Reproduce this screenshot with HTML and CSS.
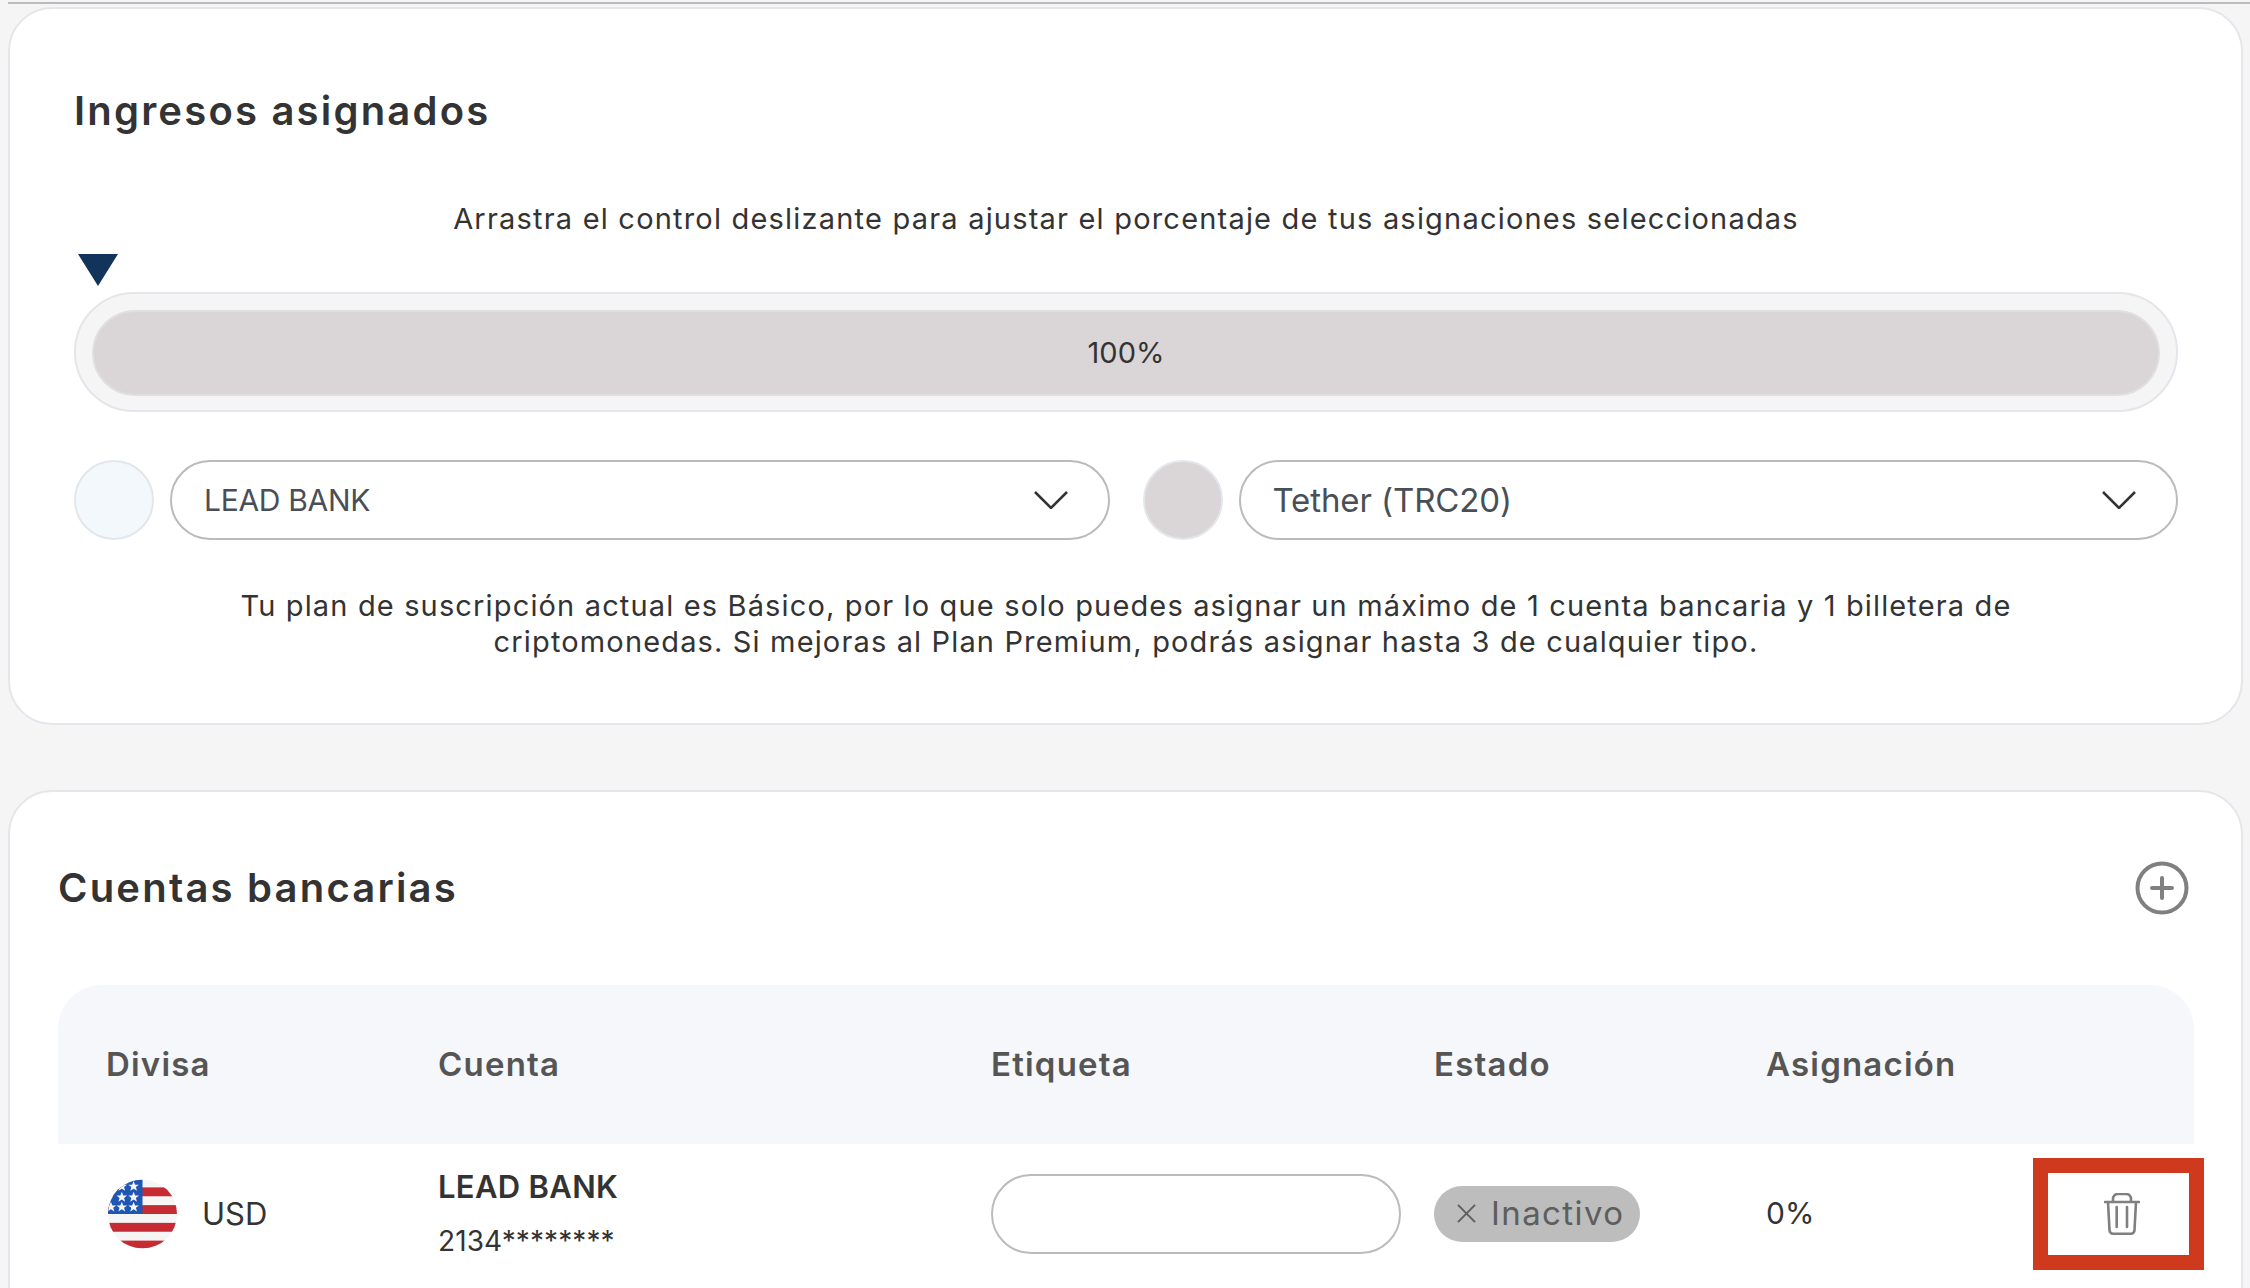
FILE: index.html
```html
<!DOCTYPE html>
<html lang="es">
<head>
  <meta charset="UTF-8">
  <title>Ingresos asignados</title>
  <link rel="stylesheet" href="styles.css">
</head>
<body>
  <div class="top-line"></div>

  <section class="card card-income">
    <h2 class="income-title">Ingresos asignados</h2>
    <p class="hint">Arrastra el control deslizante para ajustar el porcentaje de tus asignaciones seleccionadas</p>
    <div class="marker"></div>
    <div class="slider">
      <div class="slider-fill">100%</div>
    </div>
    <div class="pickers">
      <div class="picker">
        <span class="dot dot-blue"></span>
        <div class="select">
          <span class="select-label">LEAD BANK</span>
          <svg class="chevron" viewBox="0 0 34 18"><path d="M1 1l16 16L33 1"/></svg>
        </div>
      </div>
      <div class="picker">
        <span class="dot dot-grey"></span>
        <div class="select">
          <span class="select-label label-wide">Tether (TRC20)</span>
          <svg class="chevron" viewBox="0 0 34 18"><path d="M1 1l16 16L33 1"/></svg>
        </div>
      </div>
    </div>
    <p class="plan-note">Tu plan de suscripción actual es Básico, por lo que solo puedes asignar un máximo de 1 cuenta bancaria y 1 billetera de<br>criptomonedas. Si mejoras al Plan Premium, podrás asignar hasta 3 de cualquier tipo.</p>
  </section>

  <section class="card card-accounts">
    <div class="accounts-head">
      <h2 class="accounts-title">Cuentas bancarias</h2>
      <svg class="add-icon" viewBox="0 0 54 54">
        <circle cx="27" cy="27" r="24.5"/>
        <path d="M17 27h20M27 17v20"/>
      </svg>
    </div>
    <div class="table-head table-cols">
      <span>Divisa</span>
      <span>Cuenta</span>
      <span>Etiqueta</span>
      <span>Estado</span>
      <span>Asignación</span>
    </div>
    <div class="table-row table-cols">
      <div class="currency">
        <svg class="flag" viewBox="0 0 70 70">
          <defs>
            <clipPath id="flagClip"><circle cx="35" cy="35" r="35"/></clipPath>
            <polygon id="star" points="0,-5.5 1.5,-1.7 5.4,-1.7 2.3,0.7 3.4,4.5 0,2.3 -3.4,4.5 -2.3,0.7 -5.4,-1.7 -1.5,-1.7" fill="#f5f5f5"/>
          </defs>
          <g clip-path="url(#flagClip)">
            <rect width="70" height="70" fill="#f5f5f5"/>
            <rect y="8" width="70" height="9" fill="#c62b33"/>
            <rect y="26" width="70" height="9" fill="#c62b33"/>
            <rect y="44" width="70" height="9" fill="#c62b33"/>
            <rect y="62" width="70" height="8" fill="#c62b33"/>
            <rect width="35" height="35" fill="#1f55b3"/>
            <use href="#star" x="14" y="7"/>
            <use href="#star" x="26" y="7"/>
            <use href="#star" x="14" y="18"/>
            <use href="#star" x="26" y="18"/>
            <use href="#star" x="3" y="28"/>
            <use href="#star" x="14" y="28"/>
            <use href="#star" x="26" y="28"/>
          </g>
        </svg>
        <span class="currency-code">USD</span>
      </div>
      <div class="account">
        <div class="account-name">LEAD BANK</div>
        <div class="account-number">2134********</div>
      </div>
      <div class="tag-input"></div>
      <div>
        <span class="badge">
          <svg class="badge-x" viewBox="0 0 20 20"><path d="M1 1l18 18M19 1L1 19"/></svg>
          Inactivo
        </span>
      </div>
      <div class="allocation">0%</div>
      <div class="delete-box">
        <svg class="trash" viewBox="0 0 36 42">
          <path d="M1 9h34M9 8V6c0-3 2-5 5-5h8c3 0 5 2 5 5v2M4 9l1.500 28c0 2 1.500 3.700 3.500 3.700h18c2 0 3.500-1.700 3.500-3.700L32 9M12.700 14v20M23 14v20"/>
        </svg>
      </div>
    </div>
  </section>
</body>
</html>
```

FILE: styles.css
```css
* {
  box-sizing: border-box;
}
html, body {
  height: 1288px;
  overflow: hidden;
}
body {
  margin: 0;
  background: #f5f5f5;
  font-family: 'Inter', 'Liberation Sans', sans-serif;
  color: #333;
}
h2, p {
  margin: 0;
}
.top-line {
  height: 2px;
  margin: 2px 0 3px 8px;
  background: #bbb;
}
.card {
  margin: 0 7px 0 8px;
  background: #fff;
  border: 2px solid #e3e6ea;
  border-radius: 44px;
}
.card-income {
  height: 718px;
  padding: 76px 63px 0 64px;
}
.card-accounts {
  margin-top: 65px;
  height: 600px;
  padding: 70px 47px 0 48px;
}
.income-title, .accounts-title {
  font-size: 40px;
  font-weight: 600;
  line-height: 52px;
  letter-spacing: 2.200px;
  color: #333;
}
.hint {
  margin-top: 62px;
  text-align: center;
  font-size: 29px;
  line-height: 40px;
  letter-spacing: 1.200px;
}
.marker {
  width: 0;
  height: 0;
  margin: 15px 0 0 4px;
  border-left: 20px solid transparent;
  border-right: 20px solid transparent;
  border-top: 32px solid #12335a;
}
.slider {
  margin-top: 6px;
  height: 120px;
  padding: 16px;
  background: #f5f5f5;
  border: 2px solid #e3e6ea;
  border-radius: 60px;
}
.slider-fill {
  height: 86px;
  display: flex;
  justify-content: center;
  align-items: center;
  background: #dad5d7;
  border: 2px solid #dfdfe4;
  border-radius: 43px;
  font-size: 29px;
  padding-bottom: 2px;
}
.pickers {
  margin-top: 48px;
  display: flex;
  gap: 33px;
}
.picker {
  flex: 1;
  display: flex;
  align-items: center;
  gap: 16px;
}
.dot {
  flex: none;
  width: 80px;
  height: 80px;
  border-radius: 50%;
  border: 2px solid #e3e6ea;
}
.dot-blue {
  background: #f2f8fc;
}
.dot-grey {
  background: #dad5d7;
}
.select {
  flex: 1;
  height: 80px;
  padding: 0 40px 0 32px;
  display: flex;
  justify-content: space-between;
  align-items: center;
  background: #fff;
  border: 2px solid #bbb;
  border-radius: 40px;
}
.select-label {
  font-size: 30px;
  letter-spacing: -0.300px;
  color: #4a4f57;
}
.label-wide {
  font-size: 33px;
  letter-spacing: -0.100px;
}
.chevron {
  width: 34px;
  height: 18px;
  fill: none;
  stroke: #333;
  stroke-width: 2.5;
}
.plan-note {
  margin-top: 48px;
  text-align: center;
  font-size: 29px;
  line-height: 36px;
  letter-spacing: 1.150px;
}
.accounts-head {
  height: 52px;
  display: flex;
  justify-content: space-between;
  align-items: center;
  padding-right: 5px;
}
.add-icon {
  width: 54px;
  height: 54px;
  fill: none;
  stroke: #808080;
  stroke-width: 4;
  stroke-linecap: round;
}
.table-cols {
  display: grid;
  grid-template-columns: 332px 553px 443px 332px 1fr;
  padding-left: 48px;
  align-items: center;
}
.table-head {
  margin-top: 71px;
  height: 159px;
  padding-bottom: 2px;
  background: #f5f7fb;
  border-radius: 44px 44px 0 0;
  font-size: 33px;
  font-weight: 600;
  letter-spacing: 1.200px;
  color: #555;
}
.table-row {
  height: 140px;
  position: relative;
  font-size: 30px;
}
.currency {
  display: flex;
  align-items: center;
  gap: 25px;
  padding-left: 2px;
}
.flag {
  width: 69px;
  height: 70px;
}
.currency-code {
  padding-bottom: 2px;
  font-size: 31px;
  color: #333;
}
.account-name {
  font-size: 31px;
  font-weight: 600;
  line-height: 40px;
  letter-spacing: 0.300px;
}
.account-number {
  margin-top: 14px;
  font-size: 28px;
  line-height: 40px;
  letter-spacing: 0.100px;
}
.tag-input {
  width: 410px;
  height: 80px;
  background: #fff;
  border: 2px solid #bbb;
  border-radius: 40px;
}
.badge {
  display: inline-flex;
  align-items: center;
  gap: 15px;
  height: 56px;
  width: 206px;
  padding-left: 23px;
  padding-bottom: 2px;
  background: #bdbdbd;
  border-radius: 28px;
  font-size: 33px;
  letter-spacing: 1.400px;
  color: #5e5e5e;
}
.badge-x {
  width: 19px;
  height: 19px;
  fill: none;
  stroke: #5e5e5e;
  stroke-width: 2;
}
.allocation {
  padding-bottom: 2px;
  font-size: 30px;
}
.delete-box {
  position: absolute;
  left: 1975px;
  top: 14px;
  width: 171px;
  height: 112px;
  padding-left: 6px;
  display: flex;
  justify-content: center;
  align-items: center;
  border: 15px solid #cf3a1f;
}
.trash {
  width: 36px;
  height: 42px;
  fill: none;
  stroke: #808080;
  stroke-width: 2.600;
  stroke-linecap: round;
}
```
